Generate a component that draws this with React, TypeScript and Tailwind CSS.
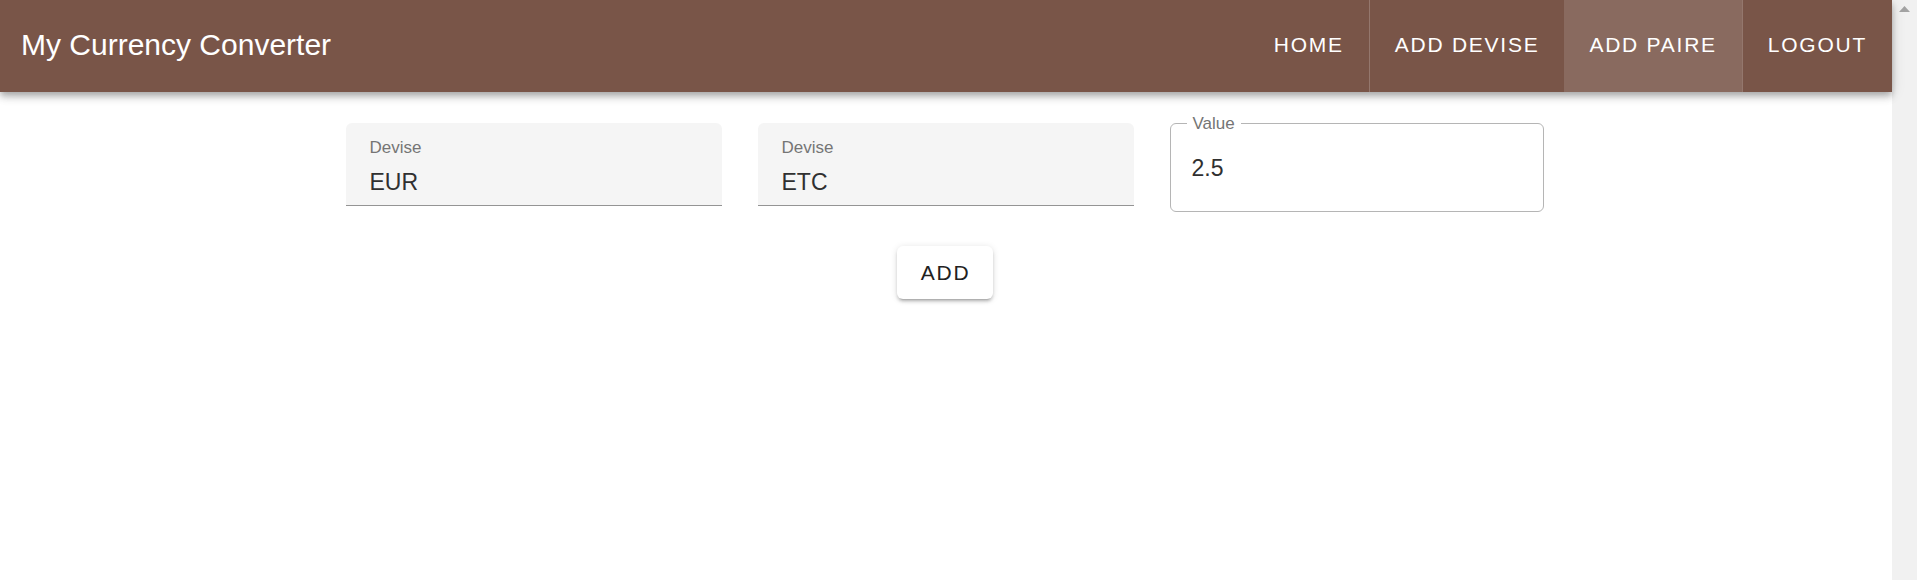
import { useState } from 'react'

type NavItem = { label: string; active?: boolean; divider?: boolean }

const navItems: NavItem[] = [
  { label: 'HOME' },
  { label: 'ADD DEVISE', divider: true },
  { label: 'ADD PAIRE', active: true },
  { label: 'LOGOUT', divider: true },
]

function FilledSelect({ label, value }: { label: string; value: string }) {
  return (
    <div className="w-[376px] h-[83px] bg-[#f5f5f5] rounded-t-[6px] border-b border-[#949494] pl-[24px] pt-[15px] flex flex-col">
      <span className="text-[17px] leading-[20px] text-[#757575]">{label}</span>
      <span className="mt-[10px] text-[23px] leading-[28px] text-[#303030]">{value}</span>
    </div>
  )
}

function OutlinedInput({ label, value, onChange }: { label: string; value: string; onChange: (v: string) => void }) {
  return (
    <div className="relative w-[374px] h-[89px] border border-[#b5b5b5] rounded-[6px] flex items-center pl-[21px]">
      <span className="absolute top-[-10px] left-[16px] px-[6px] bg-white text-[17px] leading-[20px] text-[#757575]">{label}</span>
      <input
        className="w-full text-[23px] leading-[28px] text-[#303030] bg-transparent outline-none"
        value={value}
        onChange={e => onChange(e.target.value)}
      />
    </div>
  )
}

export default function App() {
  const [value, setValue] = useState('2.5')

  return (
    <div className="flex h-[580px] w-full overflow-hidden bg-white font-['Liberation_Sans',Arial,sans-serif]">
      <div className="flex-1 flex flex-col min-w-0">
        <header className="relative z-10 h-[92px] bg-[#795548] flex items-stretch pl-[21px] shadow-[0_3px_6px_-1px_rgba(0,0,0,0.2),0_6px_7px_0_rgba(0,0,0,0.14),0_1px_14px_0_rgba(0,0,0,0.12)]">
          <div className="flex items-center pb-[2px] text-white text-[30px] leading-none">My Currency Converter</div>
          <div className="flex-1" />
          <nav className="flex items-stretch">
            {navItems.map(item => (
              <button
                key={item.label}
                className={`px-[25px] pb-[4px] flex items-center text-white text-[21px] tracking-[1.75px] leading-none ${item.divider ? 'border-l border-[#94776d]' : ''} ${item.active ? 'bg-[#896a5f]' : ''}`}
              >
                {item.label}
              </button>
            ))}
          </nav>
        </header>

        <main className="flex flex-col items-center pr-[3px]">
          <div className="mt-[31px] flex items-start gap-[36px]">
            <FilledSelect label="Devise" value="EUR" />
            <FilledSelect label="Devise" value="ETC" />
            <OutlinedInput label="Value" value={value} onChange={setValue} />
          </div>
          <button className="mt-[34px] w-[96px] h-[53px] rounded-[6px] bg-white flex items-center justify-center pl-[2px] text-[21px] tracking-[1.75px] text-[#212121] shadow-[0_4px_2px_-3px_rgba(0,0,0,0.2),0_3px_3px_0_rgba(0,0,0,0.14),0_1px_7px_0_rgba(0,0,0,0.12)]">
            ADD
          </button>
        </main>
      </div>

      {/* scrollbar strip */}
      <div className="w-[25px] h-full bg-[#f1f1f1] flex flex-col items-center pt-[6px]">
        <svg width="11" height="6" viewBox="0 0 11 6">
          <polygon points="5.5,0 11,6 0,6" fill="#a3a3a3" />
        </svg>
      </div>
    </div>
  )
}
